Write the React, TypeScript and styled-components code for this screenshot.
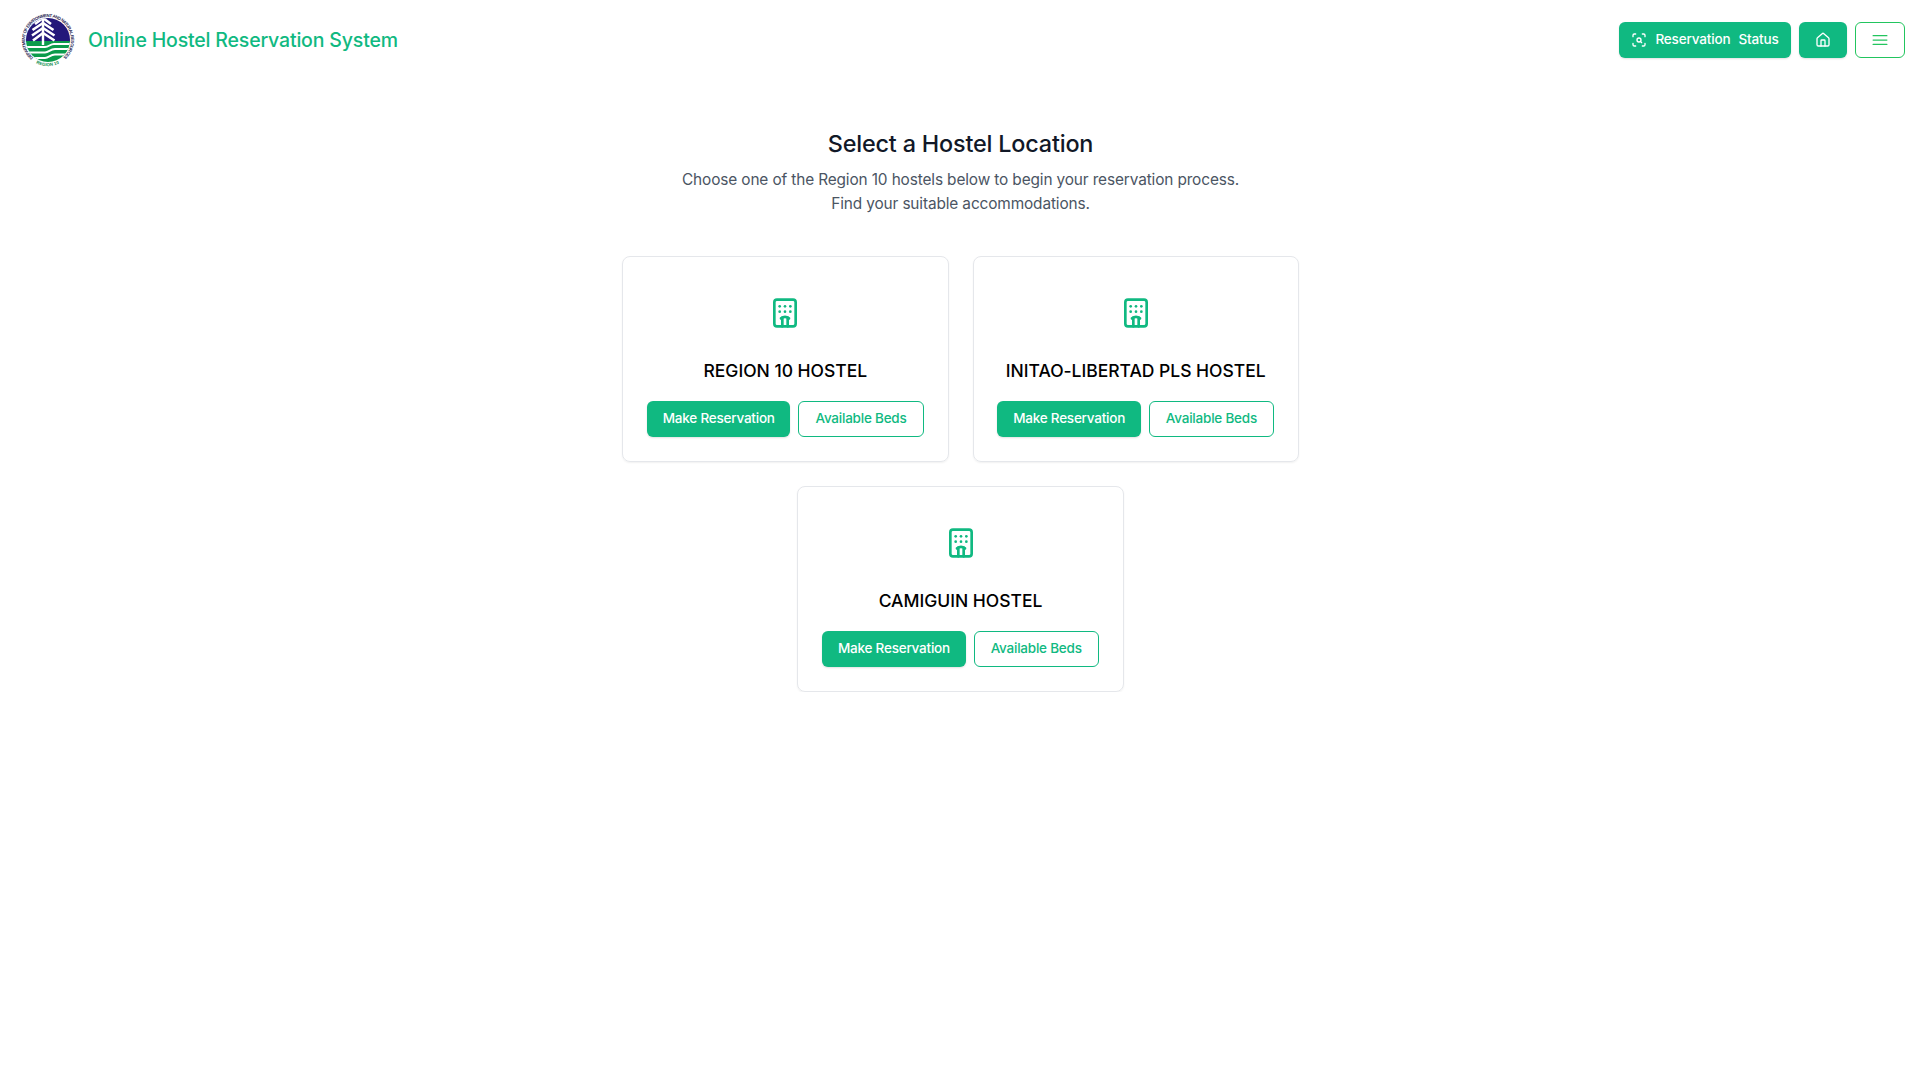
import React from "react";
import styled, { createGlobalStyle, css } from "styled-components";
import { Hotel, House, ScanSearch } from "lucide-react";

const GREEN = "#10b981";

const GlobalStyle = createGlobalStyle`
  *, *::before, *::after { box-sizing: border-box; }
  body {
    margin: 0;
    background: #fff;
    color: #000;
    font-family: Inter, "Open Sans", sans-serif;
    line-height: 1.5;
  }
  h1, h2, h3, p { margin: 0; }
`;

const Header = styled.header`
  display: flex;
  align-items: center;
  justify-content: space-between;
  height: 80px;
  padding: 0 16px 0 21px;
`;

const Brand = styled.div`
  display: flex;
  align-items: center;
  gap: 13px;
`;

const BrandName = styled.h1`
  color: ${GREEN};
  font-size: 19.5px;
  font-weight: 500;
  line-height: 28px;
  letter-spacing: -0.17px;
  white-space: nowrap;
`;

const Actions = styled.nav`
  display: flex;
  gap: 8px;
`;

const Button = styled.button<{ $outline?: boolean; $width: number }>`
  display: inline-flex;
  align-items: center;
  justify-content: center;
  gap: 8px;
  width: ${(p) => p.$width}px;
  height: 36px;
  padding: 0;
  border: 0;
  border-radius: 6px;
  background: ${GREEN};
  color: #fff;
  font-family: inherit;
  font-size: 13.5px;
  font-weight: 500;
  line-height: 20px;
  letter-spacing: -0.15px;
  white-space: nowrap;
  box-shadow: 0 1px 2px rgba(0, 0, 0, 0.12);
  ${(p) =>
    p.$outline &&
    css`
      border: 1px solid ${GREEN};
      background: #fff;
      color: ${GREEN};
      box-shadow: none;
    `}
`;

const Label = styled.span`
  padding-bottom: 2px;
`;

const MenuButton = styled(Button)`
  border-color: #22c55e;
  color: #22c55e;
`;

const Main = styled.main`
  display: flex;
  flex-direction: column;
  align-items: center;
  padding-top: 48px;
`;

const Heading = styled.h2`
  color: #111827;
  font-size: 23.4px;
  font-weight: 500;
  line-height: 32px;
  letter-spacing: -0.18px;
`;

const Lead = styled.p`
  margin-top: 8px;
  color: #4b5563;
  font-size: 15.4px;
  line-height: 24px;
  letter-spacing: -0.13px;
  text-align: center;
`;

const Cards = styled.section`
  display: flex;
  flex-wrap: wrap;
  justify-content: center;
  gap: 24px;
  width: 720px;
  margin-top: 40px;
`;

const Card = styled.article`
  display: flex;
  flex-direction: column;
  align-items: center;
  width: 326.4px;
  height: 206px;
  padding: 24px;
  border: 1px solid #e5e7eb;
  border-radius: 8px;
  box-shadow: 0 1px 2px rgba(0, 0, 0, 0.06);
`;

const IconBox = styled.div`
  display: flex;
  margin-left: 0.15px;
  padding: 16px;
  color: ${GREEN};
`;

const CardTitle = styled.h3`
  margin: 12px 0 16px;
  font-size: 17.5px;
  font-weight: 500;
  line-height: 28px;
  letter-spacing: -0.02px;
  white-space: nowrap;
`;

const CardActions = styled.div`
  display: flex;
  gap: 8px;

  ${Button} {
    flex-shrink: 0;
    letter-spacing: -0.22px;
  }
`;

const Logo = () => (
  <svg width="54" height="54" viewBox="0 0 54 54" aria-label="DENR">
    <defs>
      <clipPath id="disc"><circle cx="27" cy="27" r="22" /></clipPath>
      <path id="ring" d="M12.2 44.6 A23 23 0 1 1 41.8 44.6" />
      <path id="base" d="M15 50.2 A26 26 0 0 0 39 50.2" />
    </defs>
    <g clipPath="url(#disc)">
      <rect width="54" height="29" fill="#24187a" />
      <rect y="28" width="54" height="26" fill="#0b9b4b" />
      <path d="M4 34H24C28 34 29 31 33 31H50M4 39.5H24C28 39.5 29 36 34 36H50M4 45H24C28 45 29 41.5 34 41.5H50" fill="none" stroke="#fff" strokeWidth="1.9" />
      <path d="M22 3V32" fill="none" stroke="#fff" strokeWidth="2.4" />
      <path d="M22 5L14 11M22 5L30 11M22 10L11.5 17M22 10L32.5 17M22 15L11 22.5M22 15L33.5 22.5M22 20L12 27.5M22 20L33.5 27.5" fill="none" stroke="#fff" strokeWidth="2.6" />
    </g>
    <g fill="#2b2a55" fontFamily="Liberation Sans, sans-serif" fontWeight="700">
      <text fontSize="4.4"><textPath href="#ring" textLength="111">DEPARTMENT OF ENVIRONMENT AND NATURAL RESOURCES</textPath></text>
      <text fontSize="4.4" fill="#0b8b4b"><textPath href="#base" textLength="24">REGION 10</textPath></text>
    </g>
  </svg>
);

const MenuIcon = () => (
  <svg width="20" height="20" viewBox="0 0 24 24" fill="none" stroke="currentColor" strokeWidth="1.5" strokeLinecap="round">
    <path d="M3.75 6.75h16.5M3.75 12h16.5M3.75 17.25h16.5" />
  </svg>
);

const hostels = ["REGION 10 HOSTEL", "INITAO-LIBERTAD PLS HOSTEL", "CAMIGUIN HOSTEL"];

export default function App() {
  return (
    <>
      <GlobalStyle />
      <Header>
        <Brand>
          <Logo />
          <BrandName>Online Hostel Reservation System</BrandName>
        </Brand>
        <Actions>
          <Button $width={172}>
            <ScanSearch size={16} />
            <Label>Reservation</Label>
            <Label>Status</Label>
          </Button>
          <Button $width={48} aria-label="Home"><House size={16} /></Button>
          <MenuButton $outline $width={50} aria-label="Menu"><MenuIcon /></MenuButton>
        </Actions>
      </Header>
      <Main>
        <Heading>Select a Hostel Location</Heading>
        <Lead>
          Choose one of the Region 10 hostels below to begin your reservation process.
          <br />
          Find your suitable accommodations.
        </Lead>
        <Cards>
          {hostels.map((name) => (
            <Card key={name}>
              <IconBox><Hotel size={32} /></IconBox>
              <CardTitle>{name}</CardTitle>
              <CardActions>
                <Button $width={143.4}><Label>Make Reservation</Label></Button>
                <Button $outline $width={125.15}><Label>Available Beds</Label></Button>
              </CardActions>
            </Card>
          ))}
        </Cards>
      </Main>
    </>
  );
}
